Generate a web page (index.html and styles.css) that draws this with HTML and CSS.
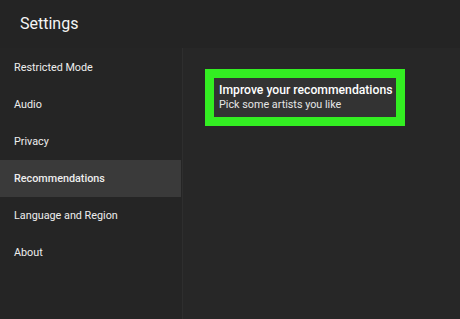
FILE: index.html
```html
<!DOCTYPE html>
<html lang="en">
<head>
    <meta charset="UTF-8">
    <title>Settings</title>
    <link rel="stylesheet" href="styles.css">
</head>
<body>
    <div class="app">
        <div class="header">
            <h1>Settings</h1>
        </div>
        <div class="main">
            <div class="sidebar">
                <div class="nav-item">Restricted Mode</div>
                <div class="nav-item">Audio</div>
                <div class="nav-item">Privacy</div>
                <div class="nav-item active">Recommendations</div>
                <div class="nav-item">Language and Region</div>
                <div class="nav-item">About</div>
            </div>
            <div class="content">
                <div class="highlight">
                    <div class="card">
                        <div class="card-title">Improve your recommendations</div>
                        <div class="card-sub">Pick some artists you like</div>
                    </div>
                </div>
            </div>
        </div>
    </div>
</body>
</html>
```

FILE: styles.css
```css
* {
    margin: 0;
    padding: 0;
    box-sizing: border-box;
}

body {
    font-family: Roboto, "Liberation Sans", sans-serif;
    background: #252525;
    color: #f2f2f2;
    width: 460px;
    height: 319px;
    overflow: hidden;
}

.app {
    height: 100%;
    display: flex;
    flex-direction: column;
}

.header {
    height: 48px;
    padding: 14px 0 0 20px;
    background: #242424;
}

.header h1 {
    font-size: 16px;
    font-weight: 400;
    color: #f5f5f5;
}

.main {
    flex: 1;
    display: flex;
}

.sidebar {
    width: 183px;
    background: #252525;
    border-right: 1px solid #2e2e2e;
    padding-top: 1px;
}

.nav-item {
    height: 37px;
    display: flex;
    align-items: center;
    padding-left: 14px;
    font-size: 10.8px;
    color: #eeeeee;
}

.nav-item.active {
    background: #3a3a3a;
    font-weight: 500;
    margin-right: 1px;
}

.content {
    flex: 1;
    background: #272727;
    padding: 21px 0 0 22px;
}

.highlight {
    display: inline-block;
    border: 9px solid #33ee22;
}

.card {
    background: #333333;
    padding: 5px 4px 6px 5px;
}

.card-title {
    font-size: 12.2px;
    font-weight: 500;
    color: #ffffff;
}

.card-sub {
    font-size: 10.8px;
    color: #e6e6e6;
    margin-top: 1px;
}
```
